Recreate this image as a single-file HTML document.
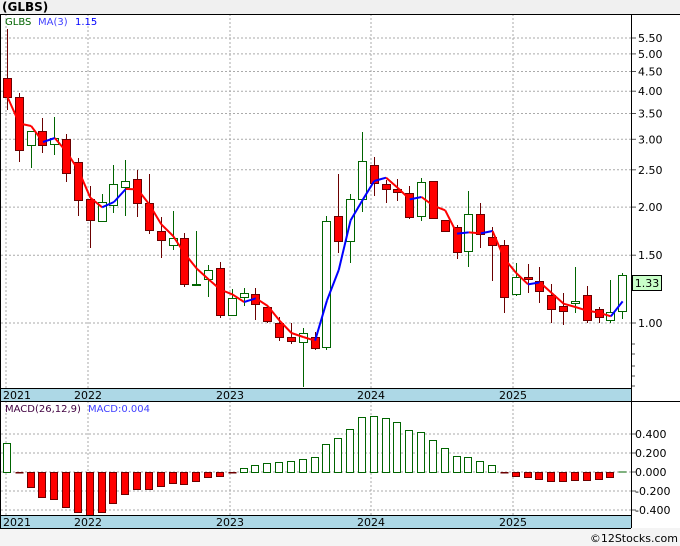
<!DOCTYPE html>
<html><head><meta charset="utf-8"><style>
body{margin:0;width:680px;height:546px;overflow:hidden;background:#fff;font-family:"DejaVu Sans","Liberation Sans",sans-serif}
svg{display:block}
</style></head><body>
<svg id="s" width="680" height="546" xmlns="http://www.w3.org/2000/svg" font-family="DejaVu Sans, Liberation Sans, sans-serif"></svg>
<script>
const S=document.getElementById('s');let h='';
const X=i=>7+11.83*i;
h+='<rect x="0" y="0" width="680" height="14" fill="#f0f0f0"/>';
h+='<text x="2" y="11" font-size="12" font-weight="bold" fill="#000">(GLBS)</text>';
h+='<rect x="0" y="528" width="680" height="18" fill="#f4f4f4"/>';
h+='<text x="678" y="542" font-size="11" text-anchor="end" fill="#000">©12Stocks.com</text>';
// bands
h+='<rect x="0" y="388" width="631" height="13" fill="#add8e6"/>';
h+='<rect x="0" y="515" width="631" height="13" fill="#add8e6"/>';
// grids
const dash='stroke="#aaa" stroke-dasharray="2,2" stroke-width="1"';
const py=p=>323-385*Math.log10(p);
[5.5,5,4.5,4,3.5,3,2.5,2,1.5,1].forEach(p=>{const y=py(p).toFixed(1);h+=`<line x1="1" x2="631" y1="${y}" y2="${y}" ${dash}/>`;h+=`<line x1="631" x2="636" y1="${y}" y2="${y}" stroke="#555"/>`;h+=`<text x="638" y="${+y+4}" font-size="11" fill="#000">${p.toFixed(2)}</text>`;});
[344,354,366,376,386].forEach(y=>h+=`<line x1="631" x2="635" y1="${y}" y2="${y}" stroke="#555"/>`);
[434,453,472,491,510].forEach((y,k)=>{h+=`<line x1="1" x2="631" y1="${y}" y2="${y}" ${dash}/>`;h+=`<line x1="631" x2="636" y1="${y}" y2="${y}" stroke="#555"/>`;h+=`<text x="635" y="${y+4}" font-size="11" fill="#000">${['0.400','0.200','0.000','-0.200','-0.400'][k]}</text>`;});
[6,88,230,371,513].forEach(x=>{h+=`<line x1="${x}" x2="${x}" y1="14" y2="388" ${dash}/>`;h+=`<line x1="${x}" x2="${x}" y1="401" y2="515" ${dash}/>`;});
[['2021',3,'start'],['2022',88,'middle'],['2023',230,'middle'],['2024',371,'middle'],['2025',513,'middle']].forEach(a=>{h+=`<text x="${a[1]}" y="399" font-size="11" text-anchor="${a[2]}" fill="#000">${a[0]}</text>`;h+=`<text x="${a[1]}" y="526" font-size="11" text-anchor="${a[2]}" fill="#000">${a[0]}</text>`;});
// candles [top,bot,high,low,col]
const C=[[78,97,29,110,'r'],[97,150,93,162,'r'],[131,145,131,168,'g'],[131,145,118,153,'r'],[138,144,117,155,'g'],[139,173,134,182,'r'],
[162,200,158,216,'r'],[199,220,186,248,'r'],[202,221,194,222,'g'],[184,205,165,213,'g'],[181,187,160,216,'g'],[179,203,170,217,'r'],[203,230,174,234,'r'],[231,240,217,258,'r'],[238,245,211,250,'g'],[238,284,233,287,'r'],[284,285,231,285,'g'],[270,279,265,297,'g'],[268,315,262,318,'r'],[298,315,289,315,'g'],[293,297,288,306,'g'],[294,304,288,320,'r'],
[307,321,305,323,'r'],[323,337,317,341,'r'],[337,341,323,344,'r'],[333,342,328,387,'g'],[337,348,332,350,'r'],[221,347,216,350,'g'],[216,241,174,253,'r'],[199,241,194,263,'g'],[161,199,132,212,'g'],[165,183,157,196,'r'],[184,189,180,203,'r'],[189,192,179,201,'r'],[193,217,186,219,'r'],[182,216,178,221,'g'],[181,218,181,218,'r'],[220,231,220,232,'r'],[227,252,225,259,'r'],[214,251,191,267,'g'],[214,234,203,248,'r'],[237,245,227,281,'r'],
[245,297,240,313,'r'],[277,294,263,296,'g'],[277,279,264,293,'r'],[281,291,267,303,'r'],[295,309,284,323,'r'],[306,311,293,325,'r'],[301,303,267,313,'g'],[295,320,286,323,'r'],[309,317,307,323,'r'],[312,320,280,323,'g'],[275,311,273,319,'g']];
C.forEach((c,i)=>{const x=X(i),cx=Math.round(x)+0.5;const col=c[4]=='r'?'#6b0000':'#006400';
h+=`<line x1="${cx}" x2="${cx}" y1="${c[2]}" y2="${c[3]}" stroke="${col}"/>`;
const bh=Math.max(1,c[1]-c[0]);
h+=`<rect x="${Math.round(x)-3.5}" y="${c[0]+0.5}" width="8" height="${bh}" fill="${c[4]=='r'?'#ff0000':'#fff'}" stroke="${col}"/>`;});
// MA
const cl=C.map(c=>c[4]=='r'?c[1]:c[0]);const ma=cl.map((v,i)=>{const a=cl.slice(Math.max(0,i-2),i+1);return a.reduce((s,t)=>s+t,0)/a.length;});
for(let i=1;i<ma.length;i++){h+=`<line x1="${X(i-1)+0.5}" y1="${ma[i-1]}" x2="${X(i)+0.5}" y2="${ma[i]}" stroke="${ma[i]<ma[i-1]?'#0000ff':'#ff0000'}" stroke-width="2"/>`;}
// legend
h+='<text x="5" y="25" font-size="10" fill="#006400">GLBS</text><text x="38" y="25" font-size="10" fill="#4040ff">MA(3)</text><text x="75" y="25" font-size="10" fill="#0000ff">1.15</text>';
h+='<text x="5" y="412" font-size="10" fill="#400040">MACD(26,12,9)</text><text x="88" y="412" font-size="10" fill="#4040ff">MACD:0.004</text>';
// MACD bars (y end)
const M=[443,473,487,497,499,507,512,515,512,503,494,489,489,486,483,484,481,477,476,473,468,465,463,462,461,459,457,444,438,429,417,416,418,422,430,432,440,448,456,457,461,465,473,476,477,479,481,481,480,480,479,477,471];
M.forEach((v,i)=>{const x=Math.round(X(i))-3.5;if(Math.abs(v-472)<=1.5&&i!=52){h+=`<rect x="${x}" y="472" width="8" height="1.5" fill="#6b0000"/>`;return;}
if(i==52){h+=`<line x1="${x}" x2="${x+8}" y1="472" y2="472" stroke="#006400"/>`;return;}
if(v<472)h+=`<rect x="${x}" y="${v+0.5}" width="7" height="${472-v}" fill="#fff" stroke="#006400"/>`;
else h+=`<rect x="${x}" y="472.5" width="7" height="${v-472}" fill="#ff0000" stroke="#6b0000"/>`;});
// frames
h+='<line x1="0" x2="680" y1="14.5" y2="14.5" stroke="#000"/>';
h+='<line x1="0.5" x2="0.5" y1="14" y2="528" stroke="#000"/>';
h+='<line x1="631.5" x2="631.5" y1="14" y2="528" stroke="#000"/>';
h+='<line x1="0" x2="631" y1="388.5" y2="388.5" stroke="#000"/>';
h+='<line x1="0" x2="680" y1="401.5" y2="401.5" stroke="#000"/>';
h+='<line x1="0" x2="631" y1="515.5" y2="515.5" stroke="#000"/>';
h+='<line x1="0" x2="631" y1="528.5" y2="528.5" stroke="#000"/>';
h+='<rect x="632.5" y="275.5" width="29" height="15" fill="#c8ffc8" stroke="#000"/><text x="647" y="287" font-size="11" text-anchor="middle" fill="#000">1.33</text>';
S.innerHTML=h;
</script>
</body></html>
